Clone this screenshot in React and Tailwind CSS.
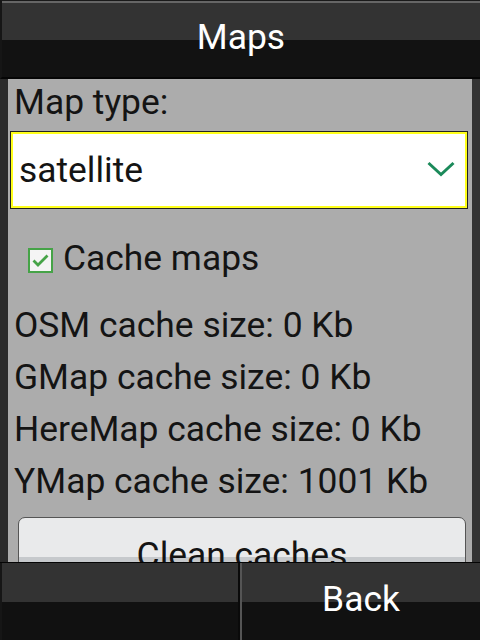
export default function App() {
  const rows = [
    "OSM cache size: 0 Kb",
    "GMap cache size: 0 Kb",
    "HereMap cache size: 0 Kb",
    "YMap cache size: 1001 Kb",
  ];
  return (
    <div
      className="w-[480px] h-[640px] flex flex-col overflow-hidden bg-[#2b2b2b] text-[35.4px]"
      style={{ fontFamily: "Roboto, 'Noto Sans', sans-serif" }}
    >
      {/* Header */}
      <div className="h-[79px] shrink-0 border-t border-t-[#1a1a1a] border-l-2 border-l-[#161616] border-b-2 border-b-[#050505] bg-[linear-gradient(to_bottom,#666_0px,#666_2px,#333_2px,#333_39px,#121212_39px)] flex items-center justify-center text-white leading-none">
        <span className="-mt-[3px]">Maps</span>
      </div>

      {/* Content */}
      <div className="flex-1 min-h-0 flex">
        <div className="w-[8px] bg-[#2b2b2b] shrink-0" />
        <div className="flex-1 bg-[#acacac] overflow-hidden flex flex-col text-[#141414]">
          <div className="h-[48px] shrink-0 flex items-center pl-[6px] leading-none">Map type:</div>
          <div className="mt-[4px] ml-[2px] mr-[4px] h-[78px] shrink-0 border border-[#222] ">
            <div className="h-full border-2 border-[#ffff1a] bg-white flex items-center justify-between pl-[6px] pr-[10px]">
              <span className="leading-none mt-[2px]">satellite</span>
              <svg width="28" height="16" viewBox="0 0 28 16" className="mt-[-2px]">
                <path d="M1.5 2 L14 13.5 L26.5 2" fill="none" stroke="#1b8a5a" strokeWidth="3" />
              </svg>
            </div>
          </div>
          <div className="mt-[27px] h-[48px] shrink-0 flex items-center pl-[20px]">
            <div className="w-[25px] h-[25px] border-2 border-[#45a347] bg-[#f4f4f4] flex items-center justify-center shrink-0">
              <svg width="17" height="13" viewBox="0 0 17 13">
                <path d="M1.5 6.5 L6 11 L15.5 1.5" fill="none" stroke="#45a347" strokeWidth="2.8" />
              </svg>
            </div>
            <span className="ml-[10px] leading-none -mt-[2px]">Cache maps</span>
          </div>
          <div className="mt-[16px] flex flex-col">
            {rows.map((r) => (
              <div key={r} className="h-[52px] flex items-center pl-[6px] leading-none">
                {r}
              </div>
            ))}
          </div>
          <div className="mt-[9px] ml-[10px] mr-[6px] h-[78px] shrink-0 rounded-[7px] border border-[#555] bg-[linear-gradient(to_bottom,#e9eaeb_39px,#c6c9cc_39px)] flex items-center justify-center leading-none">
            Clean caches
          </div>
        </div>
        <div className="w-[8px] bg-[#333] shrink-0" />
      </div>

      {/* Footer */}
      <div className="h-[78px] shrink-0 border-t border-t-[#050505] grid grid-cols-2 bg-[linear-gradient(to_bottom,#333_39px,#111_39px)]">
        <div className="border-l-2 border-l-[#161616] border-r-2 border-r-[#0a0a0a]" />
        <div className="border-l-2 border-l-[#555] flex items-center justify-center text-white leading-none">
          <span className="-mt-[4px]">Back</span>
        </div>
      </div>
    </div>
  );
}
